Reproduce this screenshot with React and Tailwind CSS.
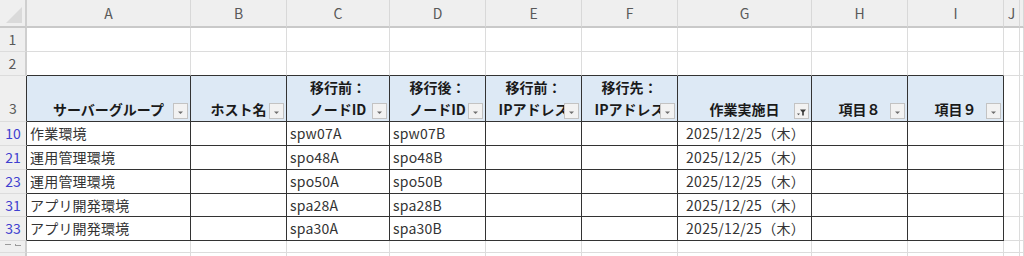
import React from "react";

const FONT = { fontFamily: '"Noto Sans CJK JP", "Noto Sans", sans-serif' };

function FilterBtn({ active }) {
  return (
    <div className="absolute right-[2px] bottom-[2px] w-[15px] h-[16px] bg-[#f2f2f2] border border-[#c3c3c3] flex items-center justify-center">
      {active ? (
        <svg width="13" height="14" viewBox="0 0 13 14">
          <path d="M5 5.5 H11 L8.8 8.2 V11.5 H7.2 V8.2 Z" fill="#3a3a3a" />
          <path d="M2 9.5 H5 L3.5 11.2 Z" fill="#555" />
        </svg>
      ) : (
        <svg width="13" height="14" viewBox="0 0 13 14">
          <path d="M4 7.5 H9 L6.5 10 Z" fill="#6e6e6e" />
        </svg>
      )}
    </div>
  );
}

const cols = ["A", "B", "C", "D", "E", "F", "G", "H", "I", "J", ""];

const headers = [
  { l1: "", l2: "サーバーグループ" },
  { l1: "", l2: "ホスト名" },
  { l1: "移行前：", l2: "ノードID" },
  { l1: "移行後：", l2: "ノードID" },
  { l1: "移行前：", l2: "IPアドレス" },
  { l1: "移行先：", l2: "IPアドレス" },
  { l1: "", l2: "作業実施日", active: true },
  { l1: "", l2: "項目８" },
  { l1: "", l2: "項目９" },
];

const rows = [
  { n: "10", d: ["作業環境", "", "spw07A", "spw07B", "", "", "2025/12/25（木）", "", ""] },
  { n: "21", d: ["運用管理環境", "", "spo48A", "spo48B", "", "", "2025/12/25（木）", "", ""] },
  { n: "23", d: ["運用管理環境", "", "spo50A", "spo50B", "", "", "2025/12/25（木）", "", ""] },
  { n: "31", d: ["アプリ開発環境", "", "spa28A", "spa28B", "", "", "2025/12/25（木）", "", ""] },
  { n: "33", d: ["アプリ開発環境", "", "spa30A", "spa30B", "", "", "2025/12/25（木）", "", ""] },
];

const LIGHT_R = "border-r border-r-[#dcdcdc]";
const DARK_R = "border-r border-r-[#333333]";
const LIGHT_B = "border-b border-b-[#dcdcdc]";
const DARK_B = "border-b border-b-[#333333]";

export default function App() {
  return (
    <div className="w-[1024px] h-[256px] overflow-hidden bg-white" style={FONT}>
      <div className="grid grid-cols-[27px_164px_96px_103px_96px_96px_96px_134px_96px_96px_16px_1fr] grid-rows-[28px_24px_24px_46px_24px_24px_24px_23px_24px_12px_24px]">
        {/* column header row */}
        <div className="bg-[#efefef] border-r-2 border-r-[#cfcfcf] border-b-2 border-b-[#c9c9c9] relative">
          <svg className="absolute right-[3px] bottom-[3px]" width="16" height="16" viewBox="0 0 16 16">
            <path d="M16 0 V16 H0 Z" fill="#dadada" />
          </svg>
        </div>
        {cols.map((c, i) => (
          <div
            key={"ch" + i}
            className="bg-[#efefef] border-r border-r-[#d8d8d8] border-b-2 border-b-[#c9c9c9] flex items-center justify-center text-[14px] text-[#595959]"
          >
            {c}
          </div>
        ))}

        {/* rows 1,2 */}
        {["1", "2"].map((r) => (
          <React.Fragment key={"r" + r}>
            <div className="bg-[#efefef] border-r-2 border-r-[#cfcfcf] border-b border-b-[#dcdcdc] flex items-center justify-center text-[14px] text-[#595959]">
              {r}
            </div>
            {cols.map((c, i) => (
              <div key={r + i} className={`${LIGHT_R} ${r === "2" && i < 9 ? DARK_B : LIGHT_B}`} />
            ))}
          </React.Fragment>
        ))}

        {/* row 3 header */}
        <div className="bg-[#efefef] border-r border-r-[#333333] border-b border-b-[#dcdcdc] flex items-end justify-center pb-[2px] text-[14px] text-[#595959]">
          3
        </div>
        {headers.map((h, i) => (
          <div
            key={"h" + i}
            className={`relative bg-[#dde9f5] ${DARK_R} ${DARK_B} flex flex-col items-center justify-end pb-[1px] overflow-hidden`}
          >
            <div className="text-[14px] font-bold leading-[22px] text-[#1a1a1a] whitespace-nowrap">{h.l1}</div>
            <div className="text-[14px] font-bold leading-[22px] text-[#1a1a1a] whitespace-nowrap">{h.l2}</div>
            <FilterBtn active={h.active} />
          </div>
        ))}
        <div className={`${LIGHT_R} ${LIGHT_B}`} />
        <div className={`${LIGHT_R} ${LIGHT_B}`} />

        {/* data rows */}
        {rows.map((row, ri) => (
          <React.Fragment key={"d" + ri}>
            <div className="bg-[#efefef] border-r border-r-[#333333] border-b border-b-[#dcdcdc] flex items-center justify-center text-[14px] text-[#3f3fd0]">
              {row.n}
            </div>
            {row.d.map((v, ci) => (
              <div
                key={ri + "-" + ci}
                className={`${DARK_R} ${DARK_B} flex items-center ${
                  ci === 6 ? "pl-[8px] tracking-[0.3px]" : "pl-[3px] tracking-[0.2px]"
                } text-[14px] text-[#333333] whitespace-nowrap overflow-hidden`}
              >
                {v}
              </div>
            ))}
            <div className={`${LIGHT_R} ${LIGHT_B}`} />
            <div className={`${LIGHT_R} ${LIGHT_B}`} />
          </React.Fragment>
        ))}

        {/* short partial row (row number clipped) */}
        <div className="bg-[#efefef] border-r-2 border-r-[#cfcfcf] border-b border-b-[#dcdcdc] flex items-start justify-center gap-[4px] pt-[3px]">
          <div className="w-[6px] h-[1px] bg-[#9a9a9a]" />
          <div className="w-[6px] h-[2px] border-l border-b border-[#9a9a9a]" />
        </div>
        {cols.map((c, i) => (
          <div key={"p" + i} className={`${LIGHT_R} ${LIGHT_B}`} />
        ))}

        {/* next row */}
        <div className="bg-[#efefef] border-r-2 border-r-[#cfcfcf] border-b border-b-[#dcdcdc]" />
        {cols.map((c, i) => (
          <div key={"q" + i} className={`${LIGHT_R} ${LIGHT_B}`} />
        ))}
      </div>
    </div>
  );
}
